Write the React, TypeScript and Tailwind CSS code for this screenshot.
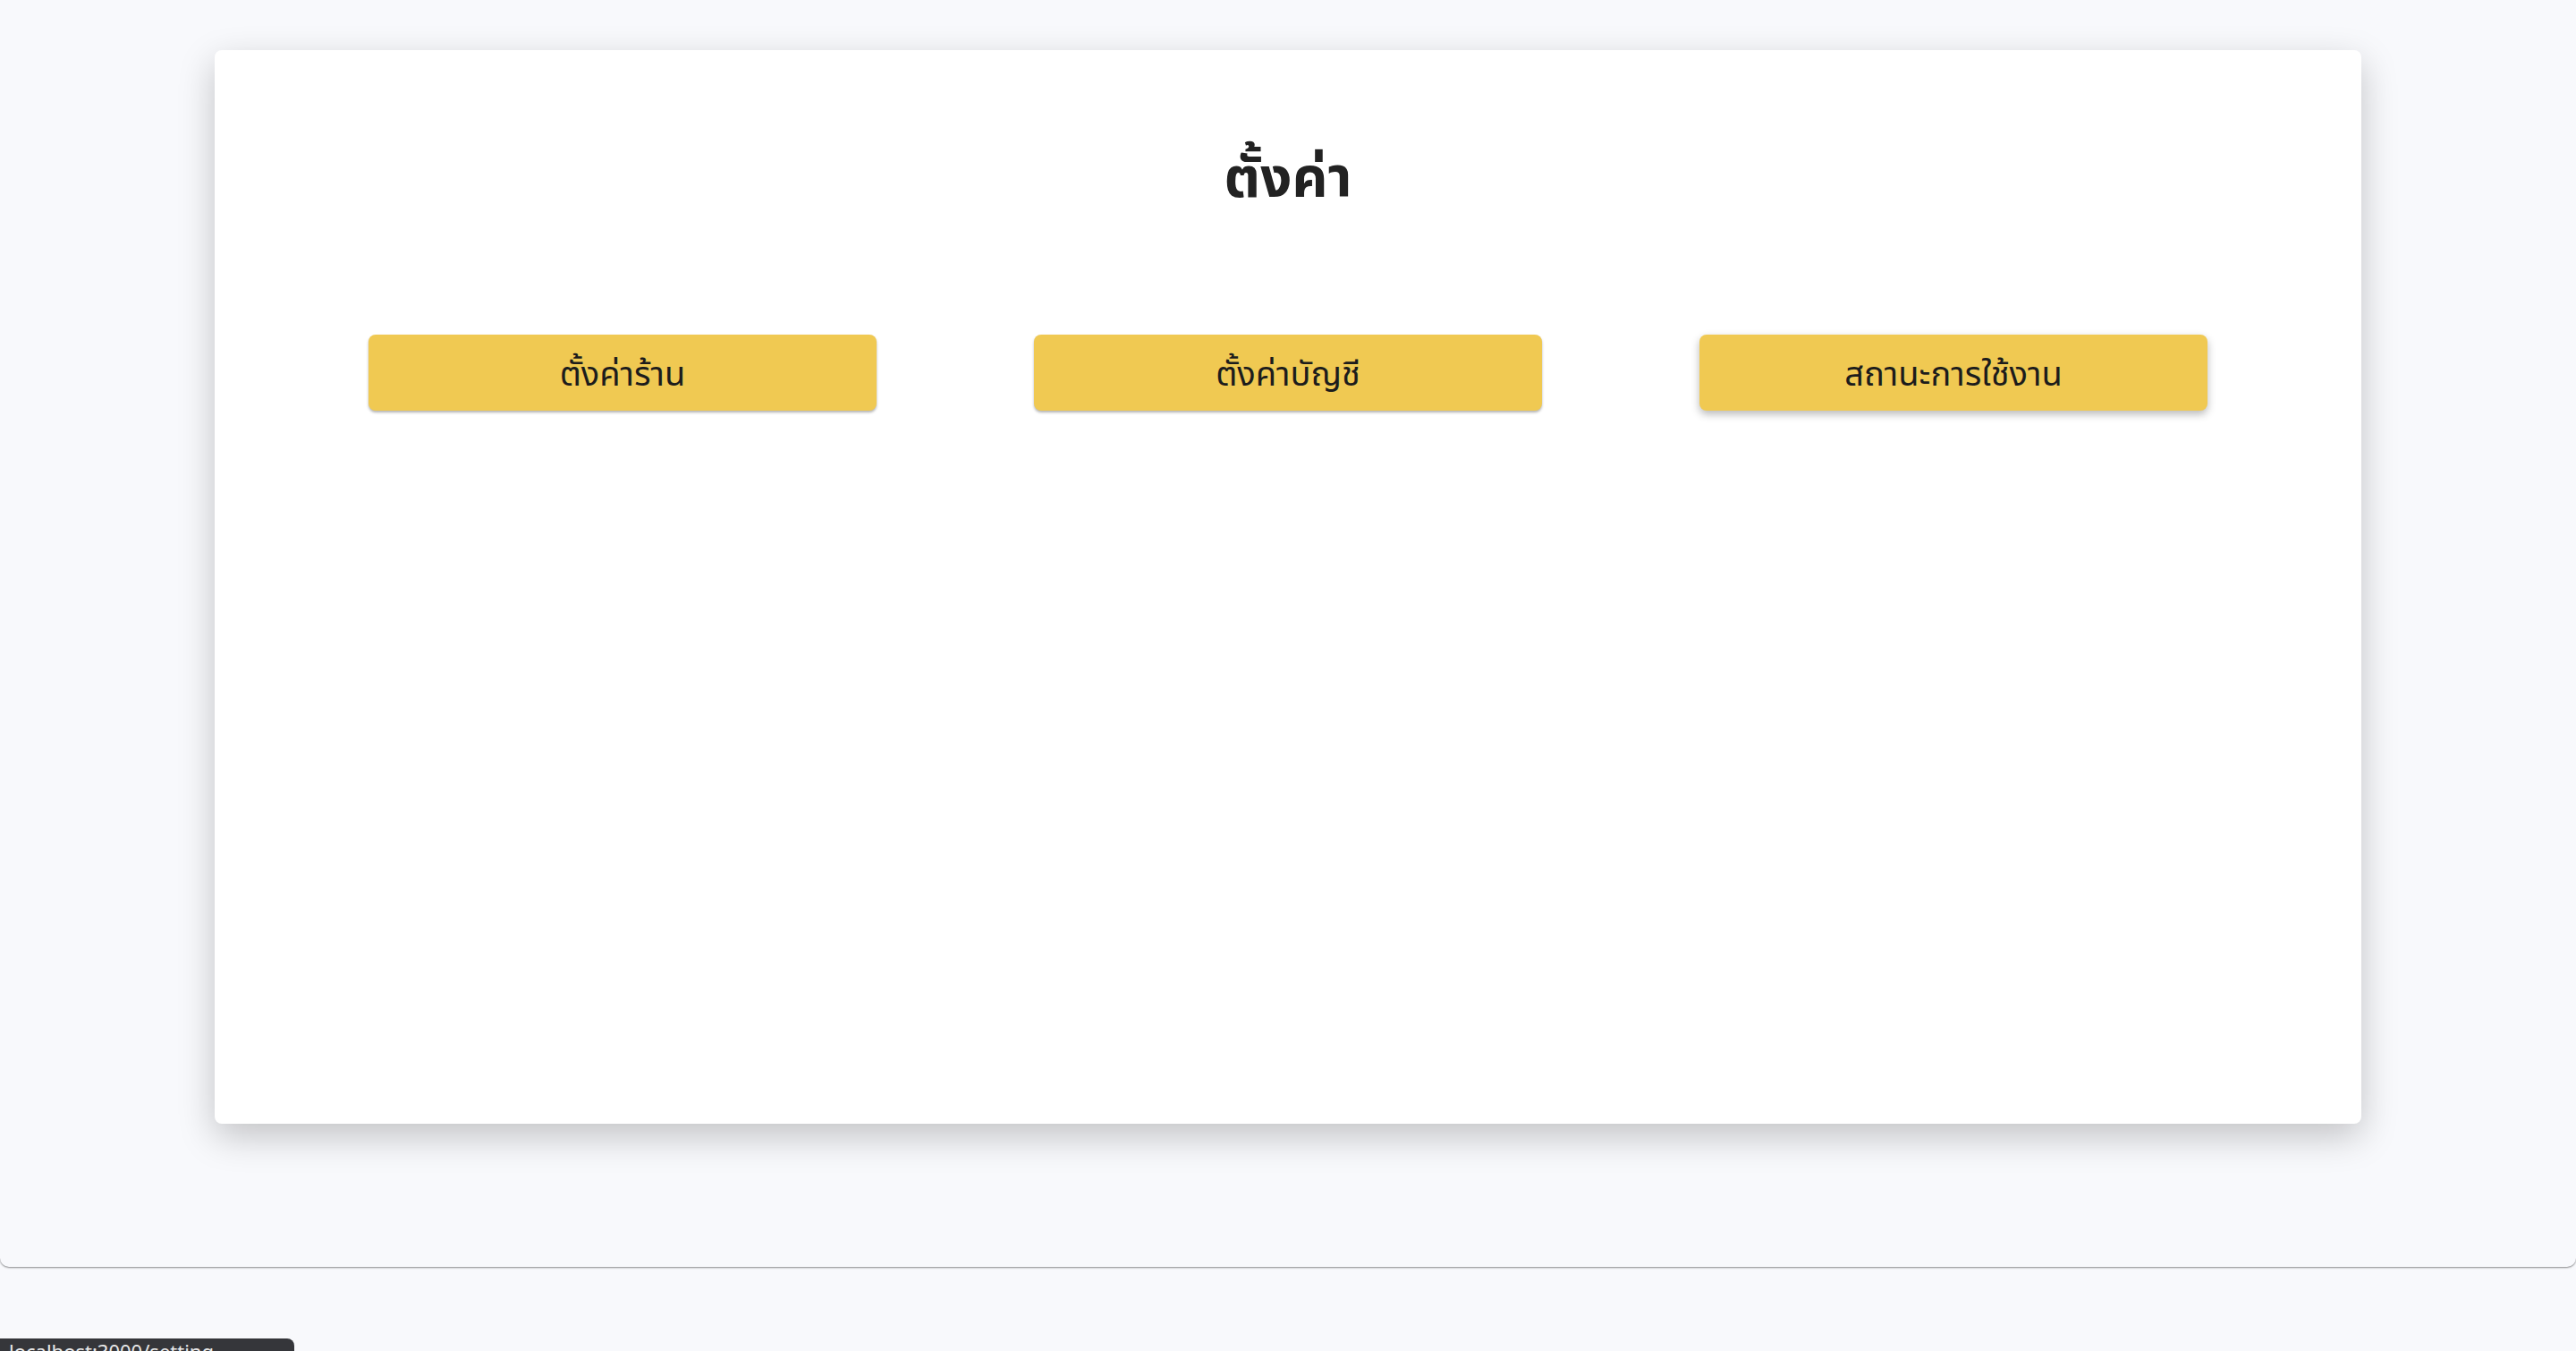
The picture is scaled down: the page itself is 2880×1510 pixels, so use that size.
export default function App() {
  const items = ["ตั้งค่าร้าน", "ตั้งค่าบัญชี", "สถานะการใช้งาน"]

  return (
    <div className="min-h-[1510px] bg-[#f8f9fc] relative overflow-hidden" style={{ fontFamily: '"Noto Sans Thai", "Noto Sans", sans-serif' }}>
      {/* หน้าหลัก */}
      <div className="h-[1416px] bg-[#f8f9fc] rounded-b-[10px] shadow-[0_1px_2px_rgba(0,0,0,0.45)] pt-[56px] px-[240px]">
        <div className="h-[1200px] bg-white rounded-[8px] shadow-[0_14px_40px_rgba(0,0,0,0.22)] px-[172px]">
          <h1 className="pt-[114px] text-center text-[62px] font-bold text-[#222] leading-none">ตั้งค่า</h1>

          <div className="mt-[142px] grid grid-cols-3 gap-[176px]">
            {items.map((label, i) => (
              <button
                key={label}
                className={
                  "h-[85px] rounded-[8px] bg-[#f0c952] text-[38px] text-[#1c1c1c] pt-[6px] " +
                  (i === 2
                    ? "shadow-[0_4px_10px_rgba(0,0,0,0.28)]"
                    : "shadow-[0_2px_3px_rgba(0,0,0,0.3)]")
                }
              >
                {label}
              </button>
            ))}
          </div>
        </div>
      </div>

      {/* แถบสถานะเบราว์เซอร์ */}
      <div className="absolute left-0 top-[1496px] w-[329px] h-[40px] bg-[#35363a] rounded-tr-[8px] px-[10px] pt-[6px] text-[22px] text-[#e8e8e8] leading-none">
        localhost:3000/setting
      </div>
    </div>
  )
}
